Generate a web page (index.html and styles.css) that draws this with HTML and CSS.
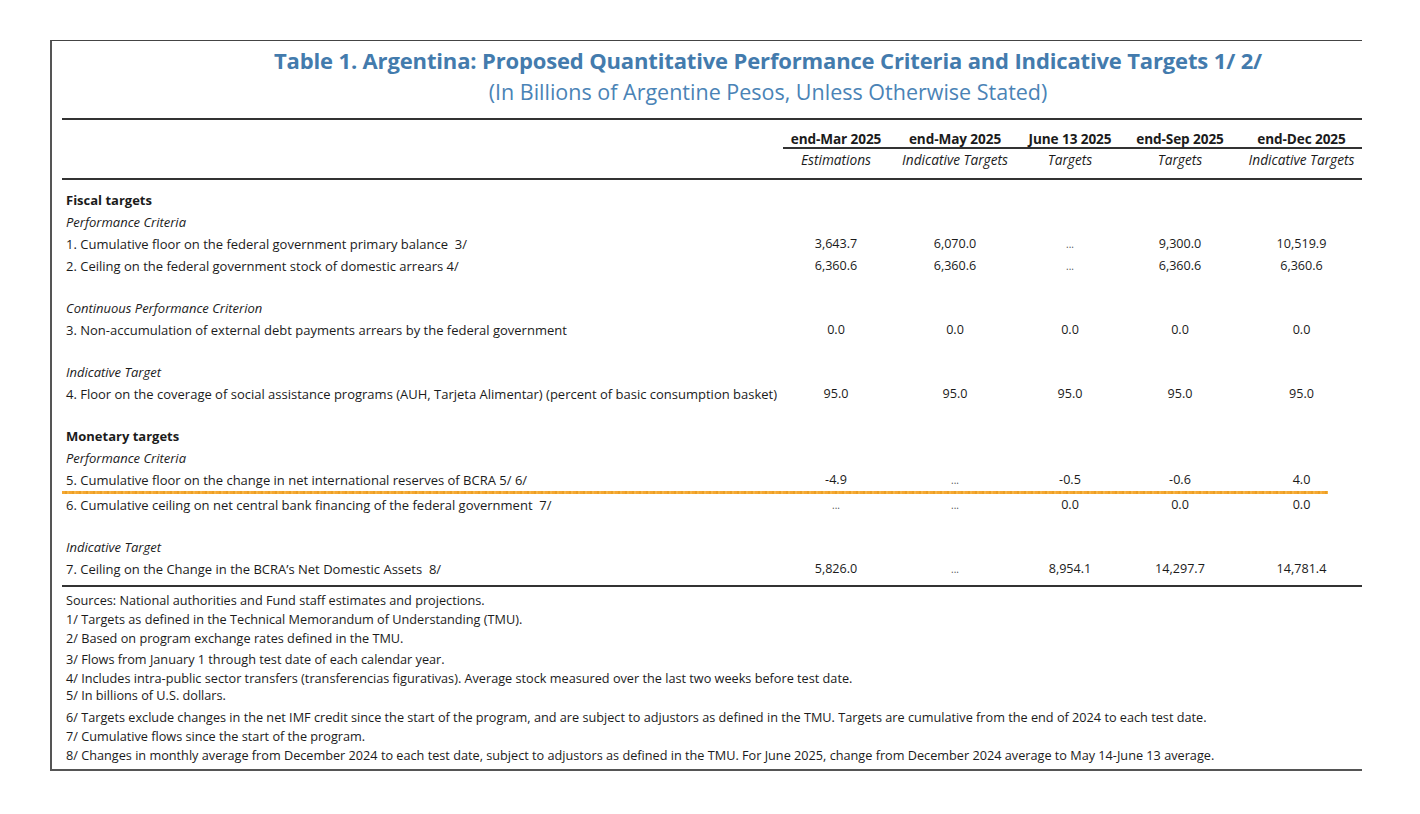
FILE: index.html
```html
<!DOCTYPE html>
<html>
<head>
<meta charset="utf-8">
<link rel="stylesheet" href="styles.css">
</head>
<body>
<div class="frame">
  <div class="titles">
    <h1 class="title">Table 1. Argentina: Proposed Quantitative Performance Criteria and Indicative Targets 1/ 2/</h1>
    <p class="subtitle">(In Billions of Argentine Pesos, Unless Otherwise Stated)</p>
  </div>
  <div class="tbl">
    <div class="row hdr1">
      <div class="lbl"></div>
      <div class="col">end-Mar 2025</div>
      <div class="col">end-May 2025</div>
      <div class="col">June 13 2025</div>
      <div class="col">end-Sep 2025</div>
      <div class="col">end-Dec 2025</div>
    </div>
    <div class="row hdr2">
      <div class="lbl"></div>
      <div class="col">Estimations</div>
      <div class="col">Indicative Targets</div>
      <div class="col">Targets</div>
      <div class="col">Targets</div>
      <div class="col">Indicative Targets</div>
    </div>
    <div class="body">
      <div class="row"><div class="lbl sec">Fiscal targets</div></div>
      <div class="row"><div class="lbl sub">Performance Criteria</div></div>
      <div class="row"><div class="lbl">1. Cumulative floor on the federal government primary balance&nbsp; 3/</div><div class="num">3,643.7</div><div class="num">6,070.0</div><div class="num dots">...</div><div class="num">9,300.0</div><div class="num">10,519.9</div></div>
      <div class="row"><div class="lbl">2. Ceiling on the federal government stock of domestic arrears 4/</div><div class="num">6,360.6</div><div class="num">6,360.6</div><div class="num dots">...</div><div class="num">6,360.6</div><div class="num">6,360.6</div></div>
      <div class="blank"></div>
      <div class="row"><div class="lbl sub">Continuous Performance Criterion</div></div>
      <div class="row"><div class="lbl">3. Non-accumulation of external debt payments arrears by the federal government</div><div class="num">0.0</div><div class="num">0.0</div><div class="num">0.0</div><div class="num">0.0</div><div class="num">0.0</div></div>
      <div class="blank"></div>
      <div class="row"><div class="lbl sub">Indicative Target</div></div>
      <div class="row"><div class="lbl">4. Floor on the coverage of social assistance programs (AUH, Tarjeta Alimentar) (percent of basic consumption basket)</div><div class="num">95.0</div><div class="num">95.0</div><div class="num">95.0</div><div class="num">95.0</div><div class="num">95.0</div></div>
      <div class="blank"></div>
      <div class="row"><div class="lbl sec">Monetary targets</div></div>
      <div class="row"><div class="lbl sub">Performance Criteria</div></div>
      <div class="row"><div class="lbl">5. Cumulative floor on the change in net international reserves of BCRA 5/ 6/</div><div class="num">-4.9</div><div class="num dots">...</div><div class="num">-0.5</div><div class="num">-0.6</div><div class="num">4.0</div></div>
      <div class="squiggle"></div>
      <div class="row"><div class="lbl">6. Cumulative ceiling on net central bank financing of the federal government&nbsp; 7/</div><div class="num dots">...</div><div class="num dots">...</div><div class="num">0.0</div><div class="num">0.0</div><div class="num">0.0</div></div>
      <div class="blank"></div>
      <div class="row"><div class="lbl sub">Indicative Target</div></div>
      <div class="row"><div class="lbl">7. Ceiling on the Change in the BCRA’s Net Domestic Assets&nbsp; 8/</div><div class="num">5,826.0</div><div class="num dots">...</div><div class="num">8,954.1</div><div class="num">14,297.7</div><div class="num">14,781.4</div></div>
    </div>
    <div class="notes">
      <p>Sources: National authorities and Fund staff estimates and projections.</p>
      <p>1/ Targets as defined in the Technical Memorandum of Understanding (TMU).</p>
      <p>2/ Based on program exchange rates defined in the TMU.</p>
      <p class="loose">3/ Flows from January 1 through test date of each calendar year.</p>
      <p>4/ Includes intra-public sector transfers (transferencias figurativas). Average stock measured over the last two weeks before test date.</p>
      <p class="tight">5/ In billions of U.S. dollars.</p>
      <p class="looser">6/ Targets exclude changes in the net IMF credit since the start of the program, and are subject to adjustors as defined in the TMU. Targets are cumulative from the end of 2024 to each test date.</p>
      <p>7/ Cumulative flows since the start of the program.</p>
      <p>8/ Changes in monthly average from December 2024 to each test date, subject to adjustors as defined in the TMU. For June 2025, change from December 2024 average to May 14-June 13 average.</p>
    </div>
  </div>
</div>
</body>
</html>
```

FILE: styles.css
```css
* { box-sizing: border-box; }
html, body { margin: 0; padding: 0; background: #fff; }
body {
  font-family: "Open Sans", "Noto Sans", sans-serif;
  color: #1b1b1b;
}
.frame {
  margin: 40px 0 0 50px;
  width: 1312px;
  border-top: 1px solid #444;
  border-left: 2px solid #555;
  border-bottom: 2px solid #555;
}
.titles {
  padding: 5px 0 0 122px;
  text-align: center;
}
.title {
  margin: 0;
  font-size: 22px;
  line-height: 28px;
  font-weight: 700;
  color: #437bad;
  letter-spacing: -0.15px;
}
.subtitle {
  margin: 5px 0 0;
  font-size: 21.5px;
  line-height: 26px;
  color: #4a83b6;
}
.tbl {
  margin: 13px 0 0 10px;
  border-top: 2px solid #333;
}
.row {
  display: grid;
  grid-template-columns: 721px 106px 132px 98px 122px 121px;
  height: 22px;
  align-items: center;
  font-size: 13px;
  line-height: 22px;
}
.hdr1 { height: 29px; align-items: end; }
.hdr1 .col {
  height: 29px;
  border-bottom: 2px solid #333;
  font-weight: 700;
  font-size: 13.6px;
  text-align: center;
  line-height: 18px;
  padding-top: 10px;
  letter-spacing: -0.1px;
}
.hdr2 {
  height: 31px;
  align-items: start;
  border-bottom: 2px solid #333;
}
.hdr2 .col {
  font-style: italic;
  font-size: 13.7px;
  text-align: center;
  line-height: 20px;
  padding-top: 1px;
}
.body {
  padding: 9px 0 5px;
  border-bottom: 2px solid #333;
}
.lbl { padding-left: 4px; white-space: nowrap; }
.sec { font-weight: 700; }
.sub { font-style: italic; }
.num { text-align: center; font-size: 12.6px; }
.dots { font-size: 10px; color: #555; }
.blank { height: 20px; }
.squiggle {
  width: 1266px;
  height: 3px;
  background: repeating-linear-gradient(90deg, #f5a731 0 3px, #eb9f24 3px 5px, #f7b445 5px 7px);
}
.notes {
  padding: 4px 0 4px 4px;
  font-size: 12.7px;
  line-height: 19px;
}
.notes p { margin: 0; }
.notes .loose { margin-top: 2px; }
.notes .tight { margin-top: -2px; }
.notes .looser { margin-top: 3px; }
```
